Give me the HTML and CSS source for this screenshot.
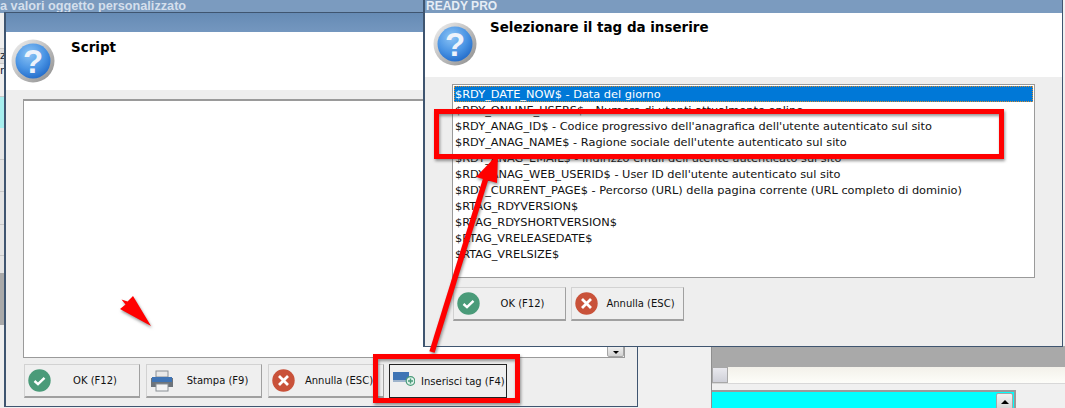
FILE: index.html
```html
<!DOCTYPE html>
<html lang="it">
<head>
<meta charset="utf-8">
<title>Selezionare il tag da inserire</title>
<link rel="stylesheet" href="styles.css">
</head>
<body>
<svg width="0" height="0" class="defs">
  <defs>
    <radialGradient id="q-blue" cx="40%" cy="30%" r="80%">
      <stop offset="0" stop-color="#8cc4f5"/>
      <stop offset="0.55" stop-color="#4a94e4"/>
      <stop offset="1" stop-color="#1a63c4"/>
    </radialGradient>
    <linearGradient id="q-ring" x1="0" y1="0" x2="1" y2="1">
      <stop offset="0" stop-color="#f2f2f2"/>
      <stop offset="1" stop-color="#8b8b8b"/>
    </linearGradient>
    <symbol id="i-question" viewBox="0 0 44 44">
      <circle cx="22" cy="22" r="21.5" fill="url(#q-ring)"/>
      <circle cx="22" cy="22" r="17.5" fill="url(#q-blue)"/>
      <text x="22" y="34" text-anchor="middle" class="qmark">?</text>
    </symbol>
    <symbol id="i-ok" viewBox="0 0 23 23">
      <circle cx="11.5" cy="11.5" r="11.2" fill="#4a9b79"/>
      <path d="M6.5 12l3.5 3.2 6.5-6.4" fill="none" stroke="#fff" stroke-width="2.4"/>
    </symbol>
    <symbol id="i-cancel" viewBox="0 0 23 23">
      <circle cx="11.5" cy="11.5" r="11.2" fill="#c9523a"/>
      <path d="M7 7l9 9M16 7l-9 9" fill="none" stroke="#fff" stroke-width="2.8"/>
    </symbol>
  </defs>
</svg>

<main class="desktop">
  <div class="back-title">a valori oggetto personalizzato</div>

  <div class="back-left">
    <div class="bl-row bl-a">z</div>
    <div class="bl-row bl-b">n</div>
    <div class="bl-cyan"></div>
    <div class="bl-row bl-c"></div>
    <div class="bl-row bl-d"></div>
    <div class="bl-row bl-e"></div>
    <div class="bl-row bl-f"></div>
    <div class="bl-g"></div>
    <div class="bl-gray"></div>
  </div>

  <div class="back-right">
    <div class="br-panel"></div>
    <div class="br-work">
      <div class="br-gray"></div>
      <div class="br-scroll"><span class="br-thumb"></span></div>
      <div class="br-cyan"><span class="scroll-btn up"></span></div>
    </div>
  </div>

  <section class="window script-win">
    <div class="titlebar"></div>
    <header class="win-head script-head">
      <svg class="q-icon"><use href="#i-question"/></svg>
      <h1 class="win-title script-title">Script</h1>
    </header>
    <div class="win-body script-body">
      <div class="textbox">
        <span class="scroll-btn down"></span>
      </div>
      <div class="btn-row script-btns">
        <button class="btn btn-lg"><svg class="b-icon"><use href="#i-ok"/></svg><span class="b-label">OK (F12)</span></button>
        <button class="btn btn-lg">
          <svg class="b-icon print" viewBox="0 0 24 22">
            <rect x="6" y="1" width="12" height="6" fill="#e8e8e8" stroke="#8a9096"/>
            <path d="M1 8h22v9H1z" fill="#6d747b"/>
            <rect x="2" y="7" width="20" height="5" fill="#3f74b5"/>
            <rect x="6" y="14" width="12" height="7" fill="#f4f4f4" stroke="#8a9096"/>
          </svg>
          <span class="b-label">Stampa (F9)</span>
        </button>
        <button class="btn btn-lg"><svg class="b-icon"><use href="#i-cancel"/></svg><span class="b-label">Annulla (ESC)</span></button>
        <button class="btn btn-tag">
          <svg class="b-icon tag" viewBox="0 0 22 16">
            <rect x="0" y="1" width="16" height="9" fill="#3f74b5"/>
            <rect x="0" y="9" width="16" height="2" fill="#9fb4cc"/>
            <circle cx="17.5" cy="10" r="4.3" fill="#dff2ea" stroke="#4a9b79" stroke-width="1.2"/>
            <path d="M15 10h5M17.500 7.500v5" stroke="#4a9b79" stroke-width="1.4"/>
          </svg>
          <span class="b-label">Inserisci tag (F4)</span>
        </button>
      </div>
    </div>
  </section>

  <section class="window tag-win">
    <div class="titlebar tag-bar">READY PRO</div>
    <header class="win-head tag-head">
      <svg class="q-icon"><use href="#i-question"/></svg>
      <h1 class="win-title tag-title">Selezionare il tag da inserire</h1>
    </header>
    <div class="win-body tag-body">
      <ul class="listbox">
        <li class="selected">$RDY_DATE_NOW$ - Data del giorno</li>
        <li>$RDY_ONLINE_USERS$ - Numero di utenti attualmente online</li>
        <li>$RDY_ANAG_ID$ - Codice progressivo dell'anagrafica dell'utente autenticato sul sito</li>
        <li>$RDY_ANAG_NAME$ - Ragione sociale dell'utente autenticato sul sito</li>
        <li>$RDY_ANAG_EMAIL$ - Indirizzo email dell'utente autenticato sul sito</li>
        <li>$RDY_ANAG_WEB_USERID$ - User ID dell'utente autenticato sul sito</li>
        <li>$RDY_CURRENT_PAGE$ - Percorso (URL) della pagina corrente (URL completo di dominio)</li>
        <li>$RTAG_RDYVERSION$</li>
        <li>$RTAG_RDYSHORTVERSION$</li>
        <li>$RTAG_VRELEASEDATE$</li>
        <li>$RTAG_VRELSIZE$</li>
      </ul>
      <div class="btn-row tag-btns">
        <button class="btn btn-sm"><svg class="b-icon"><use href="#i-ok"/></svg><span class="b-label">OK (F12)</span></button>
        <button class="btn btn-sm"><svg class="b-icon"><use href="#i-cancel"/></svg><span class="b-label">Annulla (ESC)</span></button>
      </div>
    </div>
  </section>

  <svg class="annotations" width="1065" height="408" viewBox="0 0 1065 408">
    <rect x="436.500" y="111.500" width="565" height="45" fill="none" stroke="#f00" stroke-width="5"/>
    <rect x="375.500" y="356.500" width="142" height="44" fill="none" stroke="#f00" stroke-width="5"/>
    <path d="M432 352L486 178" stroke="#f00" stroke-width="5.500" fill="none"/>
    <polygon points="498,154 476,177 497,183" fill="#f00"/>
    <polygon points="151,326 120,309 125.500,304.500 121.500,299.500 127.500,301.500 133,296" fill="#f00"/>
  </svg>
</main>
</body>
</html>
```

FILE: styles.css
```css
* { box-sizing: border-box; }
html, body { margin: 0; padding: 0; }
body {
  width: 1065px;
  height: 408px;
  overflow: hidden;
  font-family: "DejaVu Sans", sans-serif;
  font-size: 11px;
  color: #111;
  background: #f0f0f0;
}
.defs { position: absolute; }
.qmark { font: bold 33px "Liberation Sans", sans-serif; fill: #eef3fb; }

.desktop { position: relative; width: 1065px; height: 408px; overflow: hidden; }

.back-title {
  position: absolute; left: 0; top: 0; width: 430px; height: 13px;
  background: #7b9bbf; color: #d4dfec;
  font-family: "Liberation Sans", sans-serif; font-weight: bold; font-size: 12.7px; line-height: 12px;
  white-space: nowrap;
}

.back-left {
  position: absolute; left: 0; top: 13px; width: 12px; height: 395px;
  background: #efefef;
  display: flex; flex-direction: column;
  font-size: 11px; line-height: 14px; color: #123;
}
.bl-row { border-bottom: 1px solid #c9c9c9; flex: none; text-indent: 0; }
.bl-a { margin-top: 35px; height: 16px; background: #e0e0e0; border-top: 1px solid #c9c9c9; }
.bl-b { height: 33px; }
.bl-cyan { height: 31px; background: #a6eeee; flex: none; }
.bl-c { height: 32px; background: #e6e6e6; }
.bl-d { height: 32px; background: #e4e4e4; }
.bl-e { height: 33px; background: #e4e4e4; }
.bl-f { height: 31px; background: #e4e4e4; }
.bl-g { height: 17px; background: #e4e4e4; flex: none; }
.bl-gray { height: 52px; background: #a9a9a9; flex: none; }

.back-right {
  position: absolute; left: 638px; top: 0; width: 427px; height: 408px;
  display: flex; background: #f0f0f0;
}
.br-panel { width: 73px; flex: none; }
.br-work { flex: 1; padding-top: 346px; display: flex; flex-direction: column; border-left: 1px solid #8f8f8f; }
.br-gray { height: 21px; background: #a9a9a9; flex: none; }
.br-scroll {
  height: 17px; flex: none; display: flex;
  background: linear-gradient(#f3f1ea, #fdfdf9);
  border-bottom: 1px solid #d8d8d8;
}
.br-thumb { width: 16px; background: linear-gradient(#e9e9ee, #cfd0d8); border: 1px solid #a8a8a8; }
.br-cyan {
  position: relative; margin: 6px 0 0 0; width: 304px; flex: 1;
  background: #0ff; border: 2px solid #9a9a9a; border-left: 0; border-bottom: 0;
}

.scroll-btn {
  position: absolute; width: 17px; height: 18px;
  background: linear-gradient(#f2f2f2, #d2d2d2);
  border: 1px solid #a5a5a5; border-radius: 2px;
  display: flex; align-items: center; justify-content: center;
}
.scroll-btn::after { content: ""; border-left: 4px solid transparent; border-right: 4px solid transparent; }
.scroll-btn.up { right: 1px; top: 1px; }
.scroll-btn.up::after { border-bottom: 4px solid #000; }
.scroll-btn.down { right: 0; bottom: 0; height: 12px; align-items: flex-end; padding-bottom: 2px; }
.scroll-btn.down::after { border-top: 3px solid #000; border-left-width: 3px; border-right-width: 3px; }

.window {
  position: absolute; display: flex; flex-direction: column;
  background: #eee; border: 1px solid #3f5570;
}
.script-win { left: 4px; top: 12px; width: 634px; height: 395px; border-left-width: 2px; }
.tag-win { left: 423px; top: -1px; width: 640px; height: 348px; border-left-width: 2px; }

.titlebar { flex: none; height: 19px; background: linear-gradient(#668bb5, #7497bf); }
.tag-bar {
  height: 13px; background: #7b9bbf; color: #e6edf5; padding-left: 1px;
  font-family: "Liberation Sans", sans-serif; font-weight: bold; font-size: 12px; line-height: 12px;
}

.win-head { flex: none; position: relative; background: #fff; display: flex; align-items: flex-start; }
.script-head { height: 58px; padding: 7px 0 0 5px; }
.tag-head { height: 64px; padding: 9px 0 0 8px; }
.q-icon { width: 44px; height: 44px; flex: none; }
.win-title {
  margin: 0; font-family: "DejaVu Sans", sans-serif; font-weight: bold; font-size: 13.45px; line-height: 18px; color: #000;
}
.script-title { margin: 0 0 0 16px; }
.tag-title { margin: -3px 0 0 13px; }

.win-body { flex: 1; min-height: 0; display: flex; flex-direction: column; }
.script-body { padding: 9px 12px 0 17px; }
.tag-body { padding: 7px 27px 0 27px; }

.textbox {
  position: relative; flex: none; height: 259px; background: #fff;
  border: 1px solid #9a9a9a; border-top-width: 2px;
}
.btn-row { display: flex; }
.script-btns { margin: 6px 0 0 1px; gap: 6px; align-items: flex-start; }
.tag-btns { margin: 9px 0 0 1px; gap: 5px; }

.btn {
  display: flex; align-items: center; padding: 0 0 0 3px; margin: 0;
  height: 34px; background: #efefef; color: #111;
  border: 1px solid; border-color: #d2d2d2 #a0a0a0 #a0a0a0 #d2d2d2;
  border-bottom-width: 2px;
  font: 10px "DejaVu Sans", sans-serif;
}
.btn-lg { width: 116px; }
.btn-sm { width: 113px; }
.btn-tag { width: 118px; margin-left: -1px; border: 1px solid #222; padding-left: 3px; }
.b-icon { width: 23px; height: 23px; flex: none; }
.b-label { flex: 1; text-align: center; white-space: nowrap; }
.print { width: 24px; height: 22px; }
.tag { width: 22px; height: 16px; margin-top: -4px; }
.btn-tag .b-label { padding-left: 6px; text-align: left; margin-top: 1px; }

.listbox {
  list-style: none; margin: 0; padding: 1px; flex: none; height: 194px;
  background: #fff; border: 1px solid #9a9a9a;
  font: 11.35px/16px "DejaVu Sans", sans-serif; color: #111;
}
.listbox li { height: 16px; padding-left: 1px; white-space: nowrap; }
.listbox li.selected { background: #0078d7; color: #fff; outline: 1px dotted #d98c2e; outline-offset: -1px; }

.annotations {
  position: absolute; left: 0; top: 0;
  filter: drop-shadow(1px 2px 1.5px rgba(60, 60, 60, .55));
}
```
